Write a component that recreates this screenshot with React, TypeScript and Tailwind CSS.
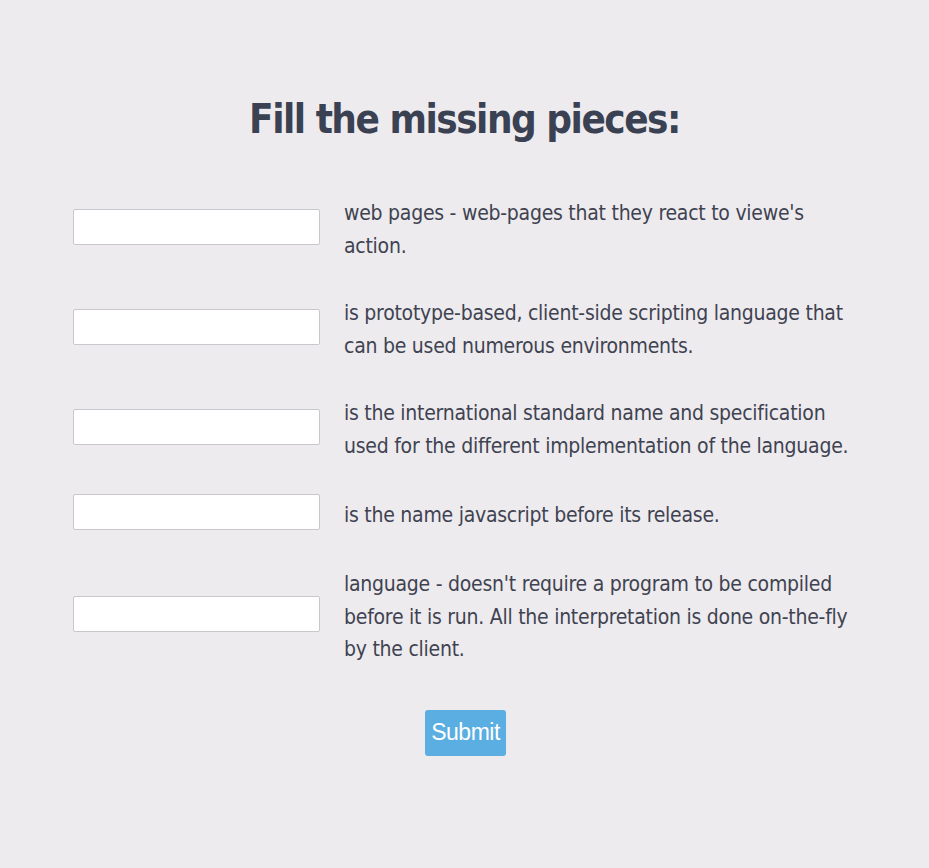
const items: string[][] = [
  ["web pages - web-pages that they react to viewe's", "action."],
  [
    "is prototype-based, client-side scripting language that",
    "can be used numerous environments.",
  ],
  [
    "is the international standard name and specification",
    "used for the different implementation of the language.",
  ],
  ["is the name javascript before its release."],
  [
    "language - doesn't require a program to be compiled",
    "before it is run. All the interpretation is done on-the-fly",
    "by the client.",
  ],
];

const App = () => {
  return (
    <div className="min-h-[868px] bg-[#edebee] pt-[91px] font-['DejaVu_Sans_Condensed',sans-serif] text-[#3f4351]">
      <h1 className="text-center text-[40px] font-bold leading-[56px] tracking-[-1.5px] text-[#3a4152]">
        Fill the missing pieces:
      </h1>
      <form className="mt-[47px] flex flex-col gap-[35px] pl-[73px]">
        {items.map((lines, i) => (
          <div key={i} className="flex items-center gap-[24px]">
            <input
              type="text"
              className="h-[36px] w-[247px] shrink-0 rounded-[2px] border border-[#c9c7cb] bg-white"
            />
            <p className="mt-[3px] -mb-[3px] text-[21px] leading-[32.5px] tracking-[-0.25px]">
              {lines.map((l, j) => (
                <span key={j} className="block whitespace-nowrap">
                  {l}
                </span>
              ))}
            </p>
          </div>
        ))}
        <div className="flex justify-center pr-[73px] pt-[12px]">
          <button
            type="button"
            className="ml-[2px] h-[46px] w-[81px] rounded-[3px] bg-[#5aaee1] font-['Liberation_Sans',sans-serif] text-[23px] tracking-[-0.5px] text-white"
          >
            Submit
          </button>
        </div>
      </form>
    </div>
  );
};

export default App;
